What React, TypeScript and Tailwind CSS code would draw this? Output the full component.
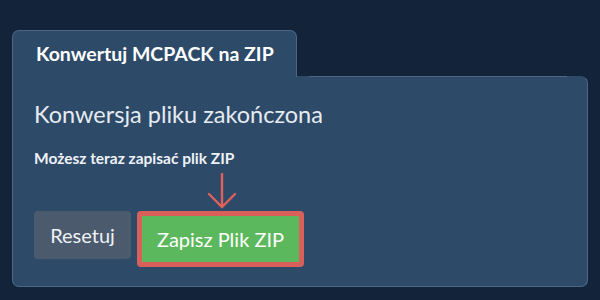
export default function App() {
  return (
    <div className="h-[300px] w-[600px] bg-[#12233a] px-3 pt-[30px] font-['Lato',sans-serif]">
      <div className="flex">
        <div className="h-[47px] w-[285px] rounded-t-[7px] border border-b-0 border-[#4c6786] bg-[#2d4a69] pl-[23px] pt-[11px] text-[19.5px] font-bold leading-[24px] text-white">
          Konwertuj MCPACK na ZIP
        </div>
      </div>
      <div className="-mt-px h-[211px] w-[576px] rounded-b-[7px] rounded-tr-[7px] border border-[#4c6786] border-t-transparent bg-[#2d4a69] px-[21px] pt-[22px]">
        <div className="relative">
          <div className="absolute left-[275px] right-[-1px] -top-[23px] h-px bg-[#4c6786]" />
        </div>
        <h2 className="text-[23.5px] font-normal leading-[30px] text-[#e6ebf1]">
          Konwersja pliku zakończona
        </h2>
        <p className="mt-[19px] text-[15.5px] font-bold leading-[20px] text-[#eef2f6]">
          Możesz teraz zapisać plik ZIP
        </p>
        <div className="relative mt-[14px] flex items-start gap-[6px]">
          <svg
            className="absolute left-[171px] top-[-9px]"
            width="34"
            height="38"
            viewBox="0 0 34 38"
            fill="none"
            stroke="#e0605a"
            strokeWidth="2.4"
            strokeLinecap="round"
          >
            <path d="M17 1 V34 M4 21 L17 34 L30 21" />
          </svg>
          <div className="mt-[29px] flex h-[48px] w-[97px] items-center justify-center rounded-[4px] bg-[#4b5b6d] text-[20px] font-normal text-[#eef2f6]">
            Resetuj
          </div>
          <div className="mt-[29px] rounded-[4px] bg-[#d9605a] p-[5px]">
            <div className="flex h-[46px] w-[157px] items-center justify-center bg-[#5cb85c] text-[20px] font-normal text-white">
              Zapisz Plik ZIP
            </div>
          </div>
        </div>
      </div>
    </div>
  );
}
